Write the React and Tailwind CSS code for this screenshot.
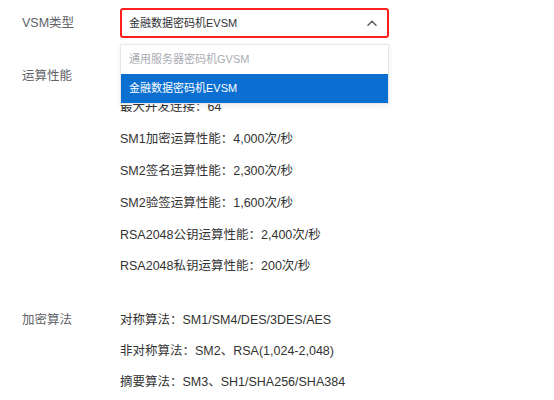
import { useState } from 'react';

const VSM_TYPES = [
  { key: 'gvsm', name: '通用服务器密码机GVSM', disabled: true },
  { key: 'evsm', name: '金融数据密码机EVSM' },
];

const PERFORMANCE = [
  '设备型号：EVSM',
  '最大并发连接：64',
  'SM1加密运算性能：4,000次/秒',
  'SM2签名运算性能：2,300次/秒',
  'SM2验签运算性能：1,600次/秒',
  'RSA2048公钥运算性能：2,400次/秒',
  'RSA2048私钥运算性能：200次/秒',
];

const ALGORITHMS = [
  '对称算法：SM1/SM4/DES/3DES/AES',
  '非对称算法：SM2、RSA(1,024-2,048)',
  '摘要算法：SM3、SH1/SHA256/SHA384',
];

function ChevronUp() {
  return (
    <svg width="10" height="6" viewBox="0 0 10 6" fill="none">
      <path d="M1 5.2L5 1.2l4 4" stroke="#606266" strokeWidth="1.6" strokeLinecap="round" strokeLinejoin="round" />
    </svg>
  );
}

function VsmSelect() {
  const [value, setValue] = useState('evsm');
  const current = VSM_TYPES.find((t) => t.key === value);

  return (
    <div className="relative w-[269px]">
      <div className="flex h-[30px] items-center justify-between rounded-[3px] border-2 border-[#ff1f1f] bg-white pl-[7px] pr-[10px]">
        <span className="text-[11px] text-[#303133]">{current.name}</span>
        <ChevronUp />
      </div>
      {/* 下拉选项 */}
      <ul className="absolute left-0 top-[36px] z-10 w-[269px] border border-[#e4e7ed] bg-white shadow-[0_2px_6px_rgba(0,0,0,0.08)]">
        {VSM_TYPES.map((t) => (
          <li
            key={t.key}
            onClick={() => !t.disabled && setValue(t.key)}
            className={`flex h-[29px] items-center pl-[8px] text-[11px] ${
              t.key === value ? 'bg-[#0a6fd0] text-white' : t.disabled ? 'text-[#a8abb2]' : 'text-[#303133]'
            }`}
          >
            {t.name}
          </li>
        ))}
      </ul>
    </div>
  );
}

function Section({ label, items, rowClass }) {
  return (
    <div className="flex">
      <div className={`w-[98px] shrink-0 text-[12.5px] text-[#606266] ${rowClass} flex items-center`}>{label}</div>
      <div className="flex flex-col">
        {items.map((item) => (
          <div key={item} className={`${rowClass} flex items-center text-[12.5px] text-[#333333]`}>
            {item}
          </div>
        ))}
      </div>
    </div>
  );
}

export default function App() {
  return (
    <div
      className="h-[400px] w-[554px] overflow-hidden bg-white pl-[22px] pt-[8px]"
      style={{ fontFamily: '"Liberation Sans", Arial, "Noto Sans CJK SC", sans-serif' }}
    >
      <div className="relative z-10 flex items-center">
        <div className="w-[98px] shrink-0 text-[12.5px] text-[#606266]">VSM类型</div>
        <VsmSelect />
      </div>

      <div className="mt-[22px]">
        <Section label="运算性能" items={PERFORMANCE} rowClass="h-[31.8px]" />
      </div>

      <div className="mt-[22px]">
        <Section label="加密算法" items={ALGORITHMS} rowClass="h-[31px]" />
      </div>
    </div>
  );
}
